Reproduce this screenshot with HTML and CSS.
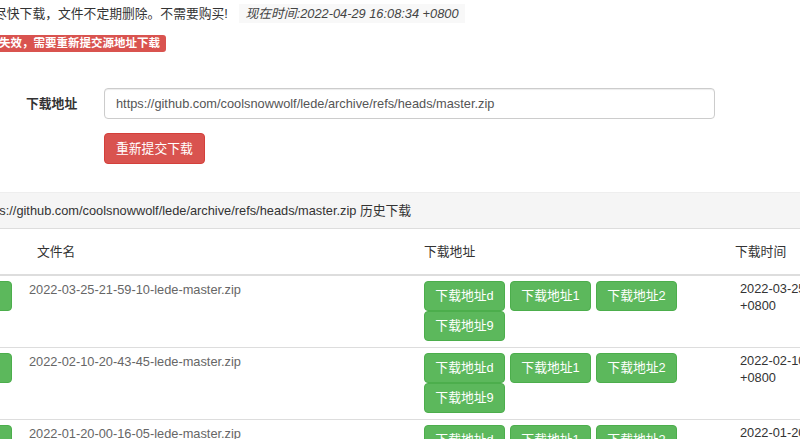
FILE: index.html
```html
<!DOCTYPE html>
<html lang="zh-CN">
<head>
  <meta charset="UTF-8" />
  <meta name="viewport" content="width=device-width, initial-scale=1.0"/>
  <title>历史下载</title>
  <link rel="stylesheet" href="styles.css">
</head>
<body>
  <div class="page">
    <p class="notice">尽快下载，文件不定期删除。不需要购买! <em class="now">现在时间:2022-04-29 16:08:34 +0800</em></p>
    <p class="status"><span class="tag tag-danger">失效，需要重新提交源地址下载</span></p>

    <form class="resubmit">
      <div class="form-row">
        <label for="src">下载地址</label>
        <input type="text" id="src" value="https://github.com/coolsnowwolf/lede/archive/refs/heads/master.zip" />
      </div>
      <div class="form-row actions">
        <button type="button" class="btn btn-danger">重新提交下载</button>
      </div>
    </form>

    <div class="panel">
      <div class="panel-heading">https://github.com/coolsnowwolf/lede/archive/refs/heads/master.zip 历史下载</div>
      <table class="history">
        <colgroup>
          <col class="c-op" />
          <col class="c-name" />
          <col class="c-links" />
          <col class="c-time" />
        </colgroup>
        <thead>
          <tr>
            <th></th>
            <th class="th-name">文件名</th>
            <th>下载地址</th>
            <th class="th-time">下载时间</th>
          </tr>
        </thead>
        <tbody>
          <tr>
            <td class="op"><button class="btn btn-success">下载</button></td>
            <td class="name">2022-03-25-21-59-10-lede-master.zip</td>
            <td>
              <div class="links">
                <a class="btn btn-success">下载地址d</a>
                <a class="btn btn-success">下载地址1</a>
                <a class="btn btn-success">下载地址2</a>
                <a class="btn btn-success">下载地址9</a>
              </div>
            </td>
            <td class="time">2022-03-25 21:59:10 +0800</td>
          </tr>
          <tr>
            <td class="op"><button class="btn btn-success">下载</button></td>
            <td class="name">2022-02-10-20-43-45-lede-master.zip</td>
            <td>
              <div class="links">
                <a class="btn btn-success">下载地址d</a>
                <a class="btn btn-success">下载地址1</a>
                <a class="btn btn-success">下载地址2</a>
                <a class="btn btn-success">下载地址9</a>
              </div>
            </td>
            <td class="time">2022-02-10 20:43:45 +0800</td>
          </tr>
          <tr>
            <td class="op"><button class="btn btn-success">下载</button></td>
            <td class="name">2022-01-20-00-16-05-lede-master.zip</td>
            <td>
              <div class="links">
                <a class="btn btn-success">下载地址d</a>
                <a class="btn btn-success">下载地址1</a>
                <a class="btn btn-success">下载地址2</a>
                <a class="btn btn-success">下载地址9</a>
              </div>
            </td>
            <td class="time">2022-01-20 00:16:05 +0800</td>
          </tr>
        </tbody>
      </table>
    </div>
  </div>
</body>
</html>
```

FILE: styles.css
```css
html, body {
  margin: 0;
  padding: 0;
  overflow: hidden;
  background: #fff;
}

body {
  font-family: "Liberation Sans", "Noto Sans CJK SC", sans-serif;
  font-size: 12.8px;
  line-height: 18px;
  color: #333;
}

/* the page is scrolled a bit to the right */
.page {
  margin-left: -40px;
  width: 912px;
}

.notice {
  margin: 5px 0 0;
  padding-left: 34px;
  white-space: nowrap;
}

.now {
  margin-left: 8px;
  padding: 2px 6px;
  color: #444;
  background: #f8f8f8;
}

.status {
  margin: 11px 0 0;
  height: 17px;
  padding-left: 33px;
}

.tag {
  display: inline-block;
  padding: 0 6px;
  font-size: 11.5px;
  line-height: 17px;
  font-weight: bold;
  color: #fff;
  border-radius: 3px;
}

.tag-danger {
  background-color: #d9534f;
}

.resubmit {
  margin-top: 37px;
}

.form-row {
  display: flex;
  align-items: center;
  padding-left: 66px;
}

.form-row label {
  width: 78px;
  font-weight: bold;
}

.form-row input {
  width: 611px;
  height: 31px;
  padding: 6px 11px;
  box-sizing: border-box;
  font: inherit;
  color: #555;
  border: 1px solid #ccc;
  border-radius: 4px;
  box-shadow: inset 0 1px 1px rgba(0,0,0,0.075);
}

.form-row.actions {
  margin-top: 14px;
  padding-left: 144px;
}

.btn {
  display: inline-block;
  box-sizing: border-box;
  font: inherit;
  line-height: 18px;
  color: #fff;
  border: 1px solid transparent;
  border-radius: 4px;
  white-space: nowrap;
  cursor: pointer;
}

.btn-danger {
  padding: 6px 11px;
  line-height: 17px;
  background-color: #d9534f;
  border-color: #d43f3a;
}

.btn-success {
  padding: 5px 10px;
  background-color: #5cb85c;
  border-color: #4cae4c;
}

.history td.op .btn {
  padding-left: 8px;
  padding-right: 16px;
}

.panel {
  margin-top: 28px;
}

.panel-heading {
  height: 35px;
  line-height: 35px;
  padding-left: 18px;
  background-color: #f5f5f5;
  border-top: 1px solid #eee;
  border-bottom: 1px solid #ddd;
  white-space: nowrap;
}

.history {
  width: 912px;
  table-layout: fixed;
  border-collapse: collapse;
}

.c-op { width: 57px; }
.c-name { width: 395px; }
.c-links { width: 310px; }
.c-time { width: 150px; }

.history th {
  padding: 14px 12px 13px;
  text-align: left;
  font-weight: normal;
  border-bottom: 2px solid #ddd;
}

.history th.th-name {
  padding-left: 20px;
}

.history th.th-time {
  padding-left: 13px;
}

.history td {
  padding: 5px 12px 6px;
  vertical-align: top;
  border-top: 1px solid #ddd;
}

.history td.op {
  padding-left: 0;
  padding-right: 5px;
  text-align: right;
}

.history td.name {
  padding-top: 5px;
  color: #666;
}

.history td.time {
  padding-top: 4px;
  padding-left: 18px;
  line-height: 17px;
}

.links {
  display: flex;
  flex-wrap: wrap;
  column-gap: 5px;
}

.links .btn {
  width: 81px;
  text-align: center;
}
```
